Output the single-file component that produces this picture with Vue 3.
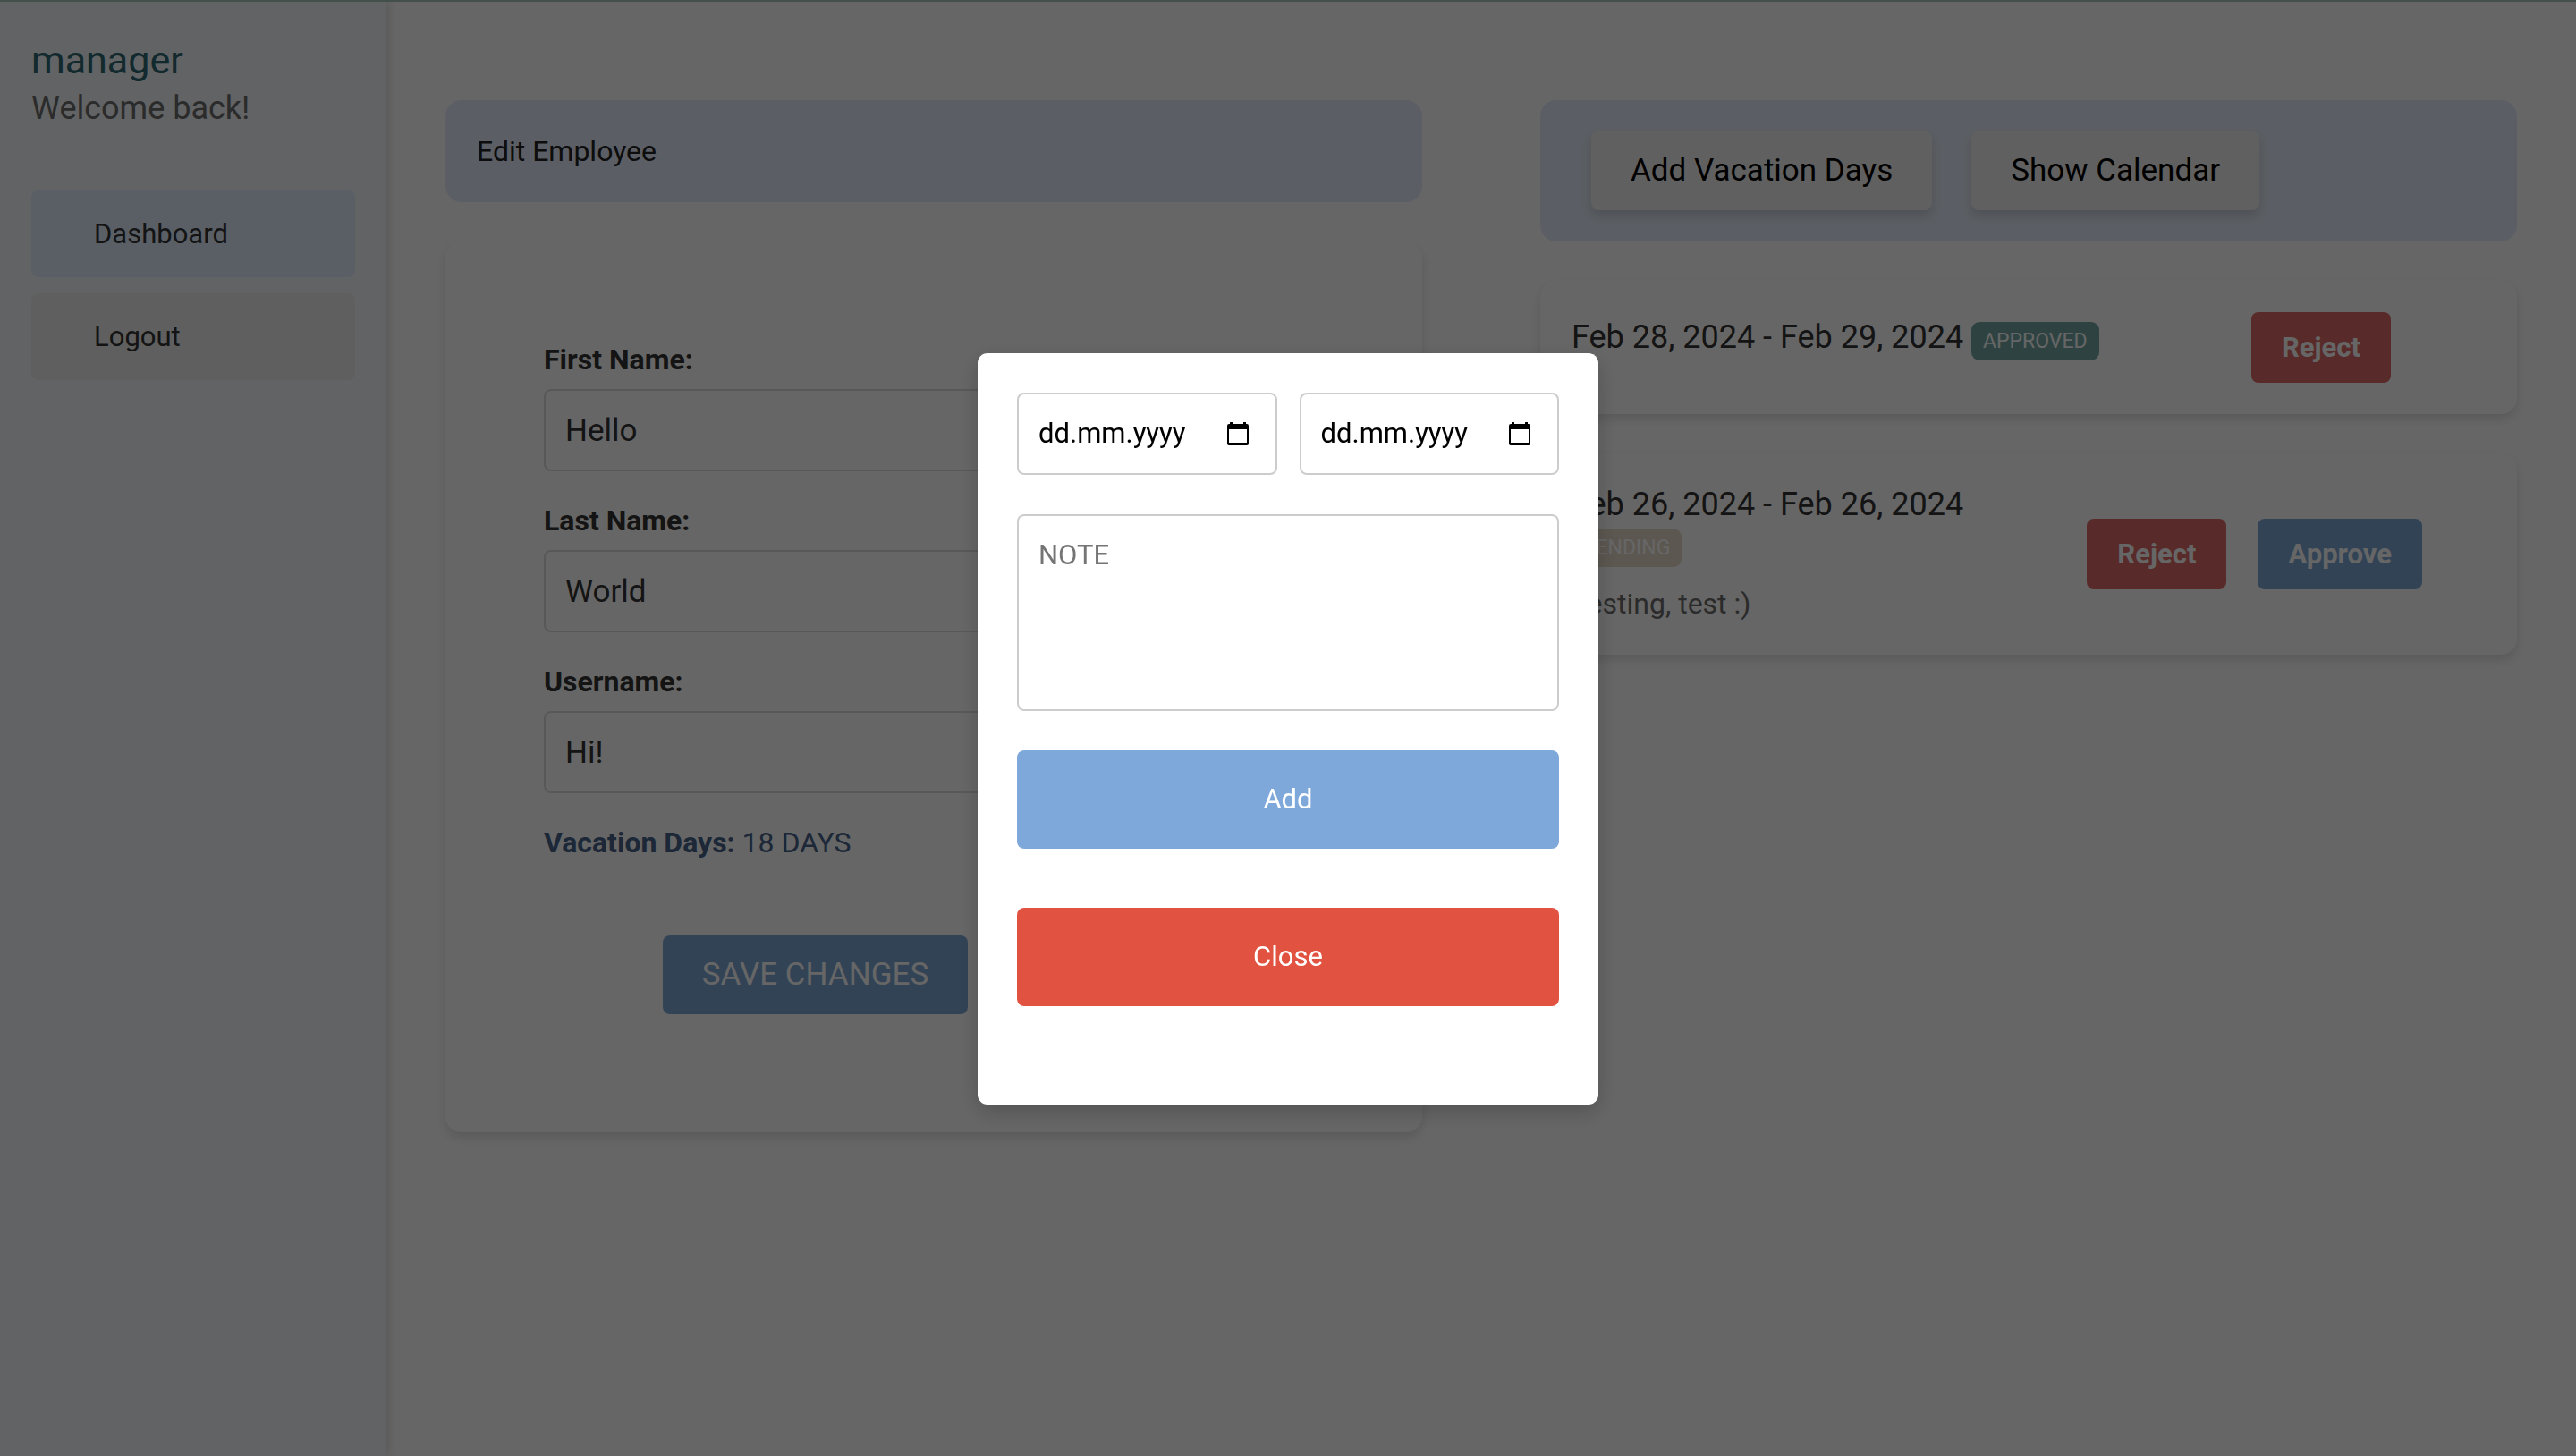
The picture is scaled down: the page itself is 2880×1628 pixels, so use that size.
<script setup>
import { ref } from 'vue'

const navigation = [
  { label: 'Dashboard', active: true },
  { label: 'Logout', active: false },
]

const fields = ref([
  { id: 'first-name', label: 'First Name:', value: 'Hello' },
  { id: 'last-name', label: 'Last Name:', value: 'World' },
  { id: 'username', label: 'Username:', value: 'Hi!' },
])

const requests = [
  {
    period: 'Feb 28, 2024 - Feb 29, 2024',
    status: 'approved',
    note: '',
    actions: ['Reject'],
  },
  {
    period: 'Feb 26, 2024 - Feb 26, 2024',
    status: 'pending',
    note: 'Testing, test :)',
    actions: ['Reject', 'Approve'],
  },
]

const dates = ref([
  { id: 'start-date', label: 'Start date', value: '' },
  { id: 'end-date', label: 'End date', value: '' },
])
const note = ref('')
</script>

<template>
  <div class="page">
    <aside class="sidebar">
      <div class="user">
        <h1 class="user-name">manager</h1>
        <p class="user-greeting">Welcome back!</p>
      </div>
      <nav class="nav">
        <a
          v-for="item in navigation"
          :key="item.label"
          href="#"
          class="nav-link"
          :class="{ active: item.active }"
        >{{ item.label }}</a>
      </nav>
    </aside>

    <main class="content">
      <section class="column">
        <header class="panel-header">
          <h2 class="panel-title">Edit Employee</h2>
        </header>
        <div class="card form-card">
          <form class="form" @submit.prevent>
            <div v-for="field in fields" :key="field.id" class="field">
              <label :for="field.id">{{ field.label }}</label>
              <input :id="field.id" v-model="field.value" type="text" />
            </div>
            <p class="balance"><strong>Vacation Days:</strong> 18 DAYS</p>
            <button type="submit" class="save">SAVE CHANGES</button>
          </form>
        </div>
      </section>

      <section class="column">
        <header class="panel-header toolbar">
          <button type="button" class="tool">Add Vacation Days</button>
          <button type="button" class="tool">Show Calendar</button>
        </header>
        <article
          v-for="request in requests"
          :key="request.period"
          class="card request"
          :class="request.status"
        >
          <div class="request-info">
            <h3 class="period">
              {{ request.period }}
              <span class="badge">{{ request.status.toUpperCase() }}</span>
            </h3>
            <p class="request-note">{{ request.note }}</p>
          </div>
          <div class="actions">
            <button
              v-for="action in request.actions"
              :key="action"
              type="button"
              class="action"
              :class="action.toLowerCase()"
            >{{ action }}</button>
          </div>
        </article>
      </section>
    </main>

    <div class="overlay">
      <form class="modal" role="dialog" aria-label="Add vacation days" @submit.prevent>
        <div class="dates">
          <div v-for="date in dates" :key="date.id" class="date">
            <input
              :id="date.id"
              v-model="date.value"
              type="text"
              placeholder="dd.mm.yyyy"
              :aria-label="date.label"
            />
            <svg class="calendar" viewBox="0 0 24 26" aria-hidden="true">
              <path
                fill-rule="evenodd"
                d="M3 0h3v2h12V0h3v2h1a2 2 0 0 1 2 2v20a2 2 0 0 1-2 2H2a2 2 0 0 1-2-2V4a2 2 0 0 1 2-2h1zM2 8v15h20V8z"
              />
            </svg>
          </div>
        </div>
        <textarea v-model="note" class="note" placeholder="NOTE" aria-label="Note"></textarea>
        <button type="submit" class="modal-button add">Add</button>
        <button type="button" class="modal-button close">Close</button>
      </form>
    </div>
  </div>
</template>

<style>
body {
  margin: 0;
  background: #fff;
}
</style>

<style scoped>
*,
*::before,
*::after {
  box-sizing: border-box;
}

.page {
  display: flex;
  min-height: 100vh;
  font-family: Roboto, "Liberation Sans", sans-serif;
  font-size: 31px;
  line-height: 44px;
  color: #333;
}

h1,
h2,
h3,
p {
  margin: 0;
  font-weight: 400;
}

button,
input,
textarea {
  font: inherit;
  border: 0;
  border-radius: 8px;
}

/* Sidebar */
.sidebar {
  flex: 0 0 15%;
  padding: 40px 35px;
  background: #f5f8fb;
  box-shadow: 2px 0 10px rgba(0, 0, 0, 0.15);
}

.user {
  margin-bottom: 66px;
}

.user-name {
  font-size: 43px;
  line-height: 55px;
  color: #2d6671;
}

.user-greeting {
  font-size: 36px;
  line-height: 52px;
  color: #6c6c6c;
}

.nav {
  display: flex;
  flex-direction: column;
  gap: 18px;
}

.nav-link {
  padding: 26px 70px;
  border-radius: 8px;
  background: #eeeeed;
  line-height: 45px;
  color: #333;
  text-decoration: none;
}

.nav-link.active {
  background: #e1edff;
}

/* Main area */
.content {
  flex: 1;
  display: grid;
  grid-template-columns: 1fr 1fr;
  gap: 132px;
  align-items: start;
  padding: 112px 66px;
}

.column {
  display: flex;
  flex-direction: column;
  gap: 44px;
}

.panel-header {
  padding: 35px;
  border-radius: 18px;
  background: #e4ecf9;
}

.panel-title {
  font-size: 32px;
  color: #222;
}

.toolbar {
  display: flex;
  gap: 44px;
  padding: 35px 57px;
}

.tool {
  padding: 22px 44px;
  background: #f0f0ef;
  font-size: 35px;
  color: #000;
  box-shadow: 0 6px 12px rgba(0, 0, 0, 0.15);
}

.card {
  border-radius: 18px;
  background: #fff;
  box-shadow: 0 6px 12px rgba(0, 0, 0, 0.12);
}

/* Employee form */
.form-card {
  padding: 110px 110px 132px;
}

.form {
  display: flex;
  flex-direction: column;
  gap: 33px;
  width: 607px;
  max-width: 100%;
  font-size: 32px;
}

.field {
  display: flex;
  flex-direction: column;
  gap: 11px;
}

.field label,
.balance strong {
  font-weight: 700;
}

.field input {
  height: 92px;
  padding: 0 22px;
  border: 2px solid #ddd;
  background: #fff;
  font-size: 35px;
  color: #333;
}

.balance {
  color: #486289;
}

.save {
  align-self: center;
  margin-top: 49px;
  padding: 22px 44px;
  background: #7da8d7;
  font-size: 35px;
  color: #fff;
}

/* Vacation requests */
.request {
  display: flex;
  align-items: center;
  justify-content: space-between;
  padding: 35px 106px 35px 35px;
}

.request-info {
  flex: 0 1 600px;
}

.request.approved {
  padding-right: 141px;
}

.request.pending .request-info {
  flex-basis: 500px;
}

.period {
  font-size: 36px;
}

.badge {
  padding: 8px 13px;
  border-radius: 9px;
  font-size: 23px;
  line-height: 23px;
  color: #fff;
}

.approved .badge {
  background: #73a8a3;
}

.pending .badge {
  background: #e6daca;
}

.request-note {
  padding-top: 23px;
  font-size: 32px;
  color: #6c6c6c;
}

.actions {
  display: flex;
  gap: 35px;
}

.action {
  padding: 18px 34px;
  font-weight: 700;
  line-height: 43px;
  color: #fff;
}

.action.reject {
  background: #dc6966;
}

.action.approve {
  background: #7da8d7;
}

/* Modal */
.overlay {
  position: fixed;
  inset: 0;
  display: flex;
  align-items: center;
  justify-content: center;
  border-top: 2px solid #434f4b;
  background: rgba(0, 0, 0, 0.6);
}

.modal {
  display: flex;
  flex-direction: column;
  width: 694px;
  padding: 44px 44px 110px;
  border-radius: 11px;
  background: #fff;
  box-shadow: 0 8px 24px rgba(0, 0, 0, 0.2);
}

.dates {
  display: flex;
  gap: 25px;
}

.date {
  flex: 1;
  min-width: 0;
  display: flex;
  align-items: center;
  height: 92px;
  padding: 0 30px 0 22px;
  border: 2px solid #ccc;
  border-radius: 8px;
}

.date input {
  flex: 1;
  min-width: 0;
  padding: 0;
  background: none;
  color: #000;
}

.date input::placeholder {
  color: #000;
  opacity: 1;
}

.calendar {
  flex: none;
  width: 24px;
  height: 26px;
}

.note {
  height: 220px;
  margin: 44px 0;
  padding: 22px;
  border: 2px solid #ccc;
  resize: none;
  color: #000;
}

.note::placeholder {
  color: #757575;
}

.modal-button {
  padding: 33px;
  color: #fff;
}

.modal-button.add {
  margin-bottom: 66px;
  background: #7fa8da;
}

.modal-button.close {
  background: #e15241;
}
</style>
